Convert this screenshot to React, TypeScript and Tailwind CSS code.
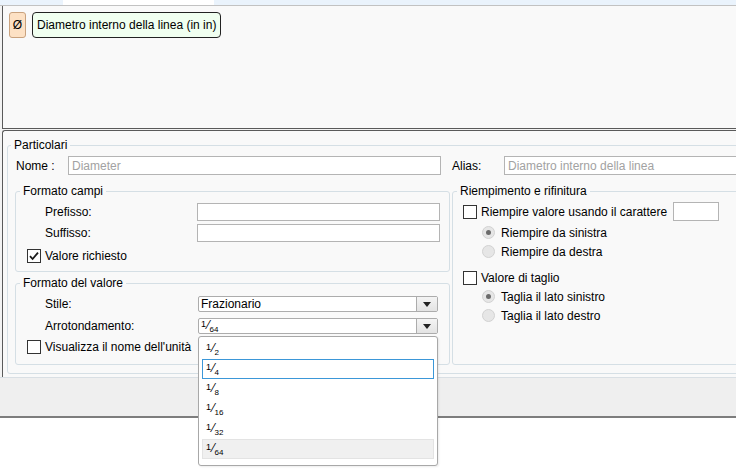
import React from "react";

const Frac = ({ d }: { d: string }) => (
  <span className="inline-flex items-start leading-none h-[14px]">
    <span className="text-[9px] mt-[1px]">1</span>
    <span className="text-[12px] ml-[1.5px]">⁄</span>
    <span className="text-[8px] mt-[7px]">{d}</span>
  </span>
);

const CheckBox = ({ checked }: { checked?: boolean }) => (
  <span className="w-[14px] h-[14px] border border-[#333333] bg-white flex items-center justify-center shrink-0">
    {checked && (
      <svg width="12" height="12" viewBox="0 0 12 12">
        <path d="M2 6.2 L4.6 9 L10 2.6" fill="none" stroke="#1a1a1a" strokeWidth="1.8" />
      </svg>
    )}
  </span>
);

const Radio = ({ checked }: { checked?: boolean }) => (
  <span className="w-[13px] h-[13px] rounded-full border border-[#d2d2d2] bg-[#e6e6e6] flex items-center justify-center shrink-0">
    {checked && <span className="w-[5px] h-[5px] rounded-full bg-[#6b6b6b]" />}
  </span>
);

const Combo = ({ children }: { children: React.ReactNode }) => (
  <div className="w-[240px] h-[16px] border border-[#acacac] rounded-[2px] bg-white flex">
    <div className="flex-1 pl-[2px] flex items-center leading-none">{children}</div>
    <div className="w-[21px] border-l border-[#acacac] bg-gradient-to-b from-[#f4f4f4] to-[#e3e3e3] flex items-center justify-center">
      <svg width="8" height="5" viewBox="0 0 8 5">
        <polygon points="0,0 8,0 4,5" fill="#222" />
      </svg>
    </div>
  </div>
);

const items = ["2", "4", "8", "16", "32", "64"];

export default function App() {
  return (
    <div className="w-[736px] h-[470px] overflow-hidden bg-white text-[12px] text-black font-['Liberation_Sans',Arial,sans-serif]">
      <div className="h-[5px] bg-[#eaf3fc] flex">
        <div className="ml-[63px] w-[151px] bg-white" />
      </div>
      <div className="h-px bg-[#c2c2c2]" />

      <div className="bg-[#f3f3f3] pl-[2px]">
        {/* top pane */}
        <div className="h-[123px] border-l border-b border-[#5a5a5a] bg-[#f9f9f9] flex items-start pl-[6px] pt-[6px] gap-[6px]">
          <div className="w-[17px] h-[26px] rounded-[3px] border border-[#c9a27e] bg-[#fde1c4] flex items-center justify-center">
            Ø
          </div>
          <div className="h-[26px] rounded-[4px] border border-[#222] bg-[#f0fff0] px-[4px] flex items-center">
            Diametro interno della linea (in in)
          </div>
        </div>
        <div className="h-px" />

        {/* bottom pane */}
        <div className="h-[247px] border-l border-t border-[#5a5a5a] rounded-tl-[3px] bg-[#f9f9f9] pl-[4px] pt-[7px]">
          <fieldset className="w-[800px] border border-[#d5dfe5] rounded-[3px] pl-[7px] pt-[4px] pb-[8px]">
            <legend className="-ml-[4px] px-[3px] leading-[14px]">Particolari</legend>

            <div className="flex items-center h-[19px]">
              <span className="ml-[1px] w-[52px]">Nome :</span>
              <div className="w-[373px] h-[19px] border border-[#b4b4b4] bg-white px-[3px] flex items-center text-[#a2a2a2]">
                Diameter
              </div>
              <span className="ml-[11px] w-[52px]">Alias:</span>
              <div className="w-[300px] h-[19px] border border-[#b4b4b4] bg-white px-[3px] flex items-center text-[#a2a2a2]">
                Diametro interno della linea
              </div>
            </div>

            <div className="mt-[9px] flex gap-[2px]">
              <div className="w-[435px] flex flex-col">
                <fieldset className="border border-[#d5dfe5] rounded-[3px] pl-[11px] pr-[9px] pt-[5px] pb-[8px]">
                  <legend className="-ml-[7px] px-[3px] leading-[14px]">Formato campi</legend>
                  <div className="flex items-center h-[18px]">
                    <span className="ml-[18px] w-[152px]">Prefisso:</span>
                    <div className="w-[243px] h-[18px] border border-[#b4b4b4] bg-white" />
                  </div>
                  <div className="flex items-center h-[18px] mt-[3px]">
                    <span className="ml-[18px] w-[152px]">Suffisso:</span>
                    <div className="w-[243px] h-[18px] border border-[#b4b4b4] bg-white" />
                  </div>
                  <div className="flex items-center h-[14px] mt-[7px] gap-[4px]">
                    <CheckBox checked />
                    <span>Valore richiesto</span>
                  </div>
                </fieldset>

                <fieldset className="mt-[4px] border border-[#d5dfe5] rounded-[3px] pl-[11px] pr-[9px] pt-[6px] pb-[10px]">
                  <legend className="-ml-[7px] px-[3px] leading-[14px]">Formato del valore</legend>
                  <div className="flex items-center h-[16px]">
                    <span className="ml-[18px] w-[153px]">Stile:</span>
                    <Combo>Frazionario</Combo>
                  </div>
                  <div className="flex items-center h-[16px] mt-[6px]">
                    <span className="ml-[18px] w-[153px]">Arrotondamento:</span>
                    <div className="relative">
                      <Combo>
                        <Frac d="64" />
                      </Combo>
                      <div className="absolute left-0 top-[18px] z-10 w-[240px] h-[130px] rounded-[3px] border border-[#a8a8a8] bg-white pt-[2px] px-[3px] shadow-[1px_1px_2px_rgba(0,0,0,0.08)]">
                        {items.map((d, i) => (
                          <div
                            key={d}
                            className={
                              "h-[20px] pl-[3px] flex items-center border " +
                              (i === 1
                                ? "border-[#3b97d8]"
                                : i === 5
                                ? "border-[#e3e3e3] bg-[#f0f0f0]"
                                : "border-transparent")
                            }
                          >
                            <Frac d={d} />
                          </div>
                        ))}
                      </div>
                    </div>
                  </div>
                  <div className="flex items-center h-[14px] mt-[6px] gap-[4px]">
                    <CheckBox />
                    <span>Visualizza il nome dell'unità</span>
                  </div>
                </fieldset>
              </div>

              <fieldset className="w-[320px] border border-[#d5dfe5] rounded-[3px] pl-[10px] pt-[4px]">
                <legend className="-ml-[6px] px-[3px] leading-[14px]">Riempimento e rifinitura</legend>
                <div className="flex items-center h-[19px]">
                  <CheckBox />
                  <span className="ml-[4px]">Riempire valore usando il carattere</span>
                  <div className="ml-[6px] w-[46px] h-[19px] border border-[#b4b4b4] bg-white" />
                </div>
                <div className="flex items-center h-[19px] mt-[2px] ml-[19px] gap-[6px]">
                  <Radio checked />
                  <span>Riempire da sinistra</span>
                </div>
                <div className="flex items-center h-[19px] ml-[19px] gap-[6px]">
                  <Radio />
                  <span>Riempire da destra</span>
                </div>
                <div className="flex items-center h-[19px] mt-[7px] gap-[4px]">
                  <CheckBox />
                  <span>Valore di taglio</span>
                </div>
                <div className="flex items-center h-[19px] ml-[19px] gap-[6px]">
                  <Radio checked />
                  <span>Taglia il lato sinistro</span>
                </div>
                <div className="flex items-center h-[19px] ml-[19px] gap-[6px]">
                  <Radio />
                  <span>Taglia il lato destro</span>
                </div>
              </fieldset>
            </div>
          </fieldset>
        </div>
      </div>

      {/* footer */}
      <div className="h-[41px] border-t border-[#d9dfe4] bg-[#efefef] border-b-2 border-b-[#7d7d7d]" />
    </div>
  );
}
